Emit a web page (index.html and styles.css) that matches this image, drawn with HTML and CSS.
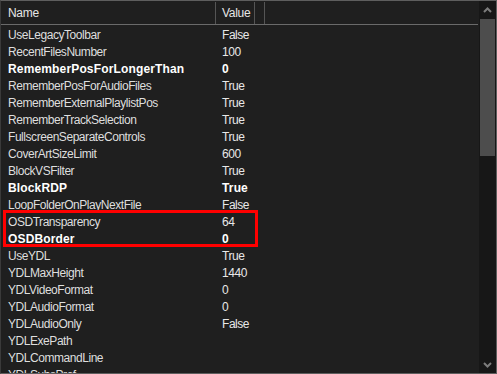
FILE: index.html
```html
<!DOCTYPE html>
<html lang="en">
<head>
    <meta charset="UTF-8">
    <title>Settings</title>
    <link rel="stylesheet" href="styles.css">
</head>
<body>
    <div class="frame">
        <div class="grid">
            <div class="header">
                <div class="col-name">Name</div>
                <div class="col-value">Value</div>
                <div class="col-pad"></div>
                <div class="col-rest"></div>
            </div>
            <div class="rows">
                <div class="row"><span class="name">UseLegacyToolbar</span><span class="value">False</span></div>
                <div class="row"><span class="name">RecentFilesNumber</span><span class="value">100</span></div>
                <div class="row bold"><span class="name">RememberPosForLongerThan</span><span class="value">0</span></div>
                <div class="row"><span class="name">RememberPosForAudioFiles</span><span class="value">True</span></div>
                <div class="row"><span class="name">RememberExternalPlaylistPos</span><span class="value">True</span></div>
                <div class="row"><span class="name">RememberTrackSelection</span><span class="value">True</span></div>
                <div class="row"><span class="name">FullscreenSeparateControls</span><span class="value">True</span></div>
                <div class="row"><span class="name">CoverArtSizeLimit</span><span class="value">600</span></div>
                <div class="row"><span class="name">BlockVSFilter</span><span class="value">True</span></div>
                <div class="row bold"><span class="name">BlockRDP</span><span class="value">True</span></div>
                <div class="row"><span class="name">LoopFolderOnPlayNextFile</span><span class="value">False</span></div>
                <div class="highlight">
                    <div class="row"><span class="name">OSDTransparency</span><span class="value">64</span></div>
                    <div class="row bold"><span class="name">OSDBorder</span><span class="value">0</span></div>
                </div>
                <div class="row"><span class="name">UseYDL</span><span class="value">True</span></div>
                <div class="row"><span class="name">YDLMaxHeight</span><span class="value">1440</span></div>
                <div class="row"><span class="name">YDLVideoFormat</span><span class="value">0</span></div>
                <div class="row"><span class="name">YDLAudioFormat</span><span class="value">0</span></div>
                <div class="row"><span class="name">YDLAudioOnly</span><span class="value">False</span></div>
                <div class="row"><span class="name">YDLExePath</span><span class="value"></span></div>
                <div class="row"><span class="name">YDLCommandLine</span><span class="value"></span></div>
                <div class="row"><span class="name">YDLSubsPref</span><span class="value"></span></div>
            </div>
        </div>
        <div class="scrollbar">
            <div class="arrow">
                <svg width="9" height="6" viewBox="0 0 9 6"><polyline points="1,5 4.5,1.5 8,5" fill="none" stroke="#7c7c7c" stroke-width="2"/></svg>
            </div>
            <div class="track">
                <div class="thumb"></div>
            </div>
            <div class="arrow">
                <svg width="9" height="6" viewBox="0 0 9 6"><polyline points="1,1 4.5,4.5 8,1" fill="none" stroke="#7c7c7c" stroke-width="2"/></svg>
            </div>
        </div>
    </div>
</body>
</html>
```

FILE: styles.css
```css
body {
    margin: 0;
    background-color: #1f1f1f;
    font-family: "Liberation Sans", Arial, sans-serif;
    font-size: 12px;
    color: #dedede;
}

.frame {
    display: flex;
    height: 374px;
    box-sizing: border-box;
    border: 1px solid #5e5e5e;
    border-left-color: #3a3a3a;
    background-color: #1f1f1f;
}

.grid {
    flex: 1;
    overflow: hidden;
}

/* cabecera de columnas */
.header {
    display: flex;
    height: 23px;
    border-bottom: 1px solid #6a6a6a;
    margin-right: 1px;
}

    .header div {
        box-sizing: border-box;
        height: 22px;
        margin-top: 1px;
        padding-top: 1px;
        line-height: 20px;
        color: #e6e6e6;
        letter-spacing: -0.3px;
    }

.col-name {
    width: 215px;
    padding-left: 7px;
    border-right: 1px solid #555;
}

.col-value {
    width: 39px;
    padding-left: 6px;
    border-right: 1px solid #555;
}

.col-pad {
    width: 10px;
    border-right: 1px solid #555;
}

.col-rest {
    flex: 1;
}

.rows {
    padding-top: 2px;
}

.row {
    display: flex;
    height: 17px;
    line-height: 17px;
    letter-spacing: -0.45px;
}

    .row .name {
        width: 215px;
        padding-left: 7px;
        box-sizing: border-box;
        white-space: nowrap;
    }

    .row .value {
        padding-left: 6px;
        color: #e8e8e8;
    }

    .row.bold {
        font-weight: bold;
        color: #ffffff;
        letter-spacing: 0.15px;
    }

        .row.bold .value {
            color: #ffffff;
        }

/* recuadro rojo */
.highlight {
    position: relative;
}

    .highlight::after {
        content: "";
        position: absolute;
        left: 2px;
        top: -4px;
        width: 255px;
        height: 37px;
        box-sizing: border-box;
        border: 3px solid #ff0000;
    }

.scrollbar {
    width: 17px;
    display: flex;
    flex-direction: column;
    background-color: #171717;
}

.arrow {
    height: 17px;
    display: flex;
    align-items: center;
    justify-content: center;
}

.track {
    flex: 1;
    padding: 1px 1px 0 1px;
}

.thumb {
    height: 137px;
    background-color: #4d4d4d;
}
```
